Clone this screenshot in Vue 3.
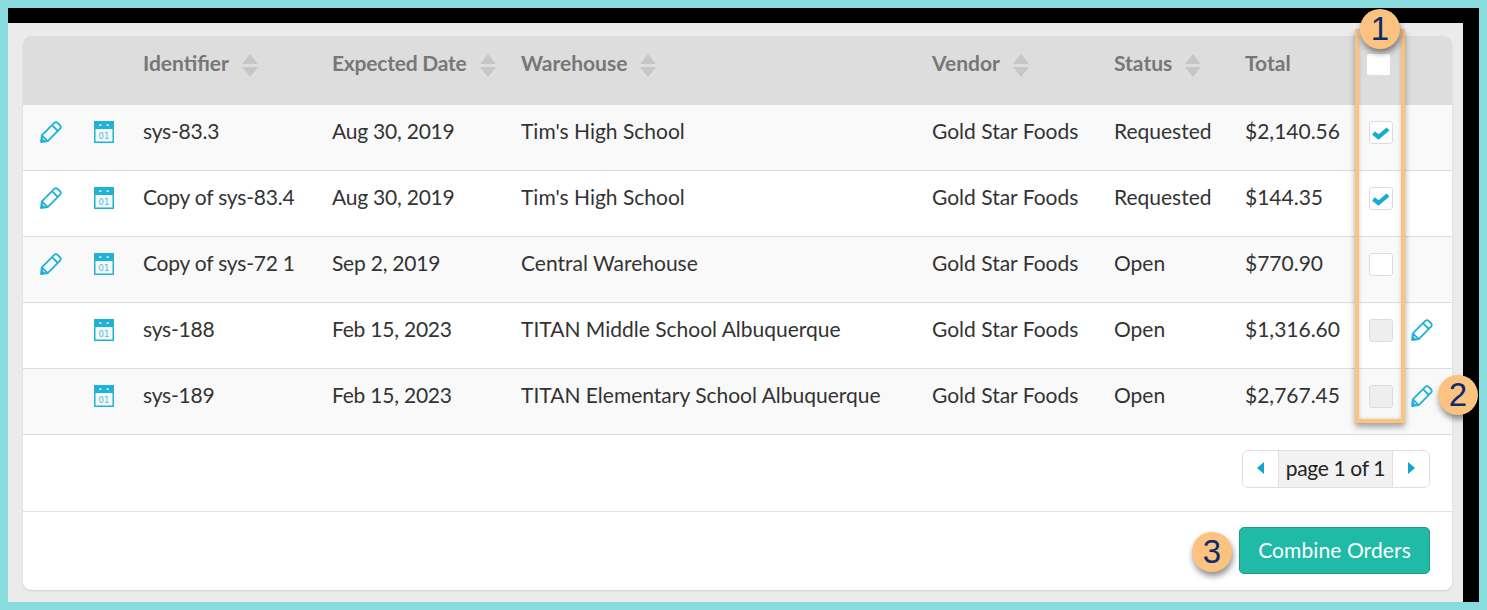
<script setup>
const columns = [
  { label: 'Identifier', sortable: true },
  { label: 'Expected Date', sortable: true, tight: true },
  { label: 'Warehouse', sortable: true },
  { label: 'Vendor', sortable: true },
  { label: 'Status', sortable: true },
  { label: 'Total', sortable: false },
]

const orders = [
  { id: 'sys-83.3', date: 'Aug 30, 2019', warehouse: "Tim's High School", vendor: 'Gold Star Foods', status: 'Requested', total: '$2,140.56', editLeft: true, check: 'on' },
  { id: 'Copy of sys-83.4', date: 'Aug 30, 2019', warehouse: "Tim's High School", vendor: 'Gold Star Foods', status: 'Requested', total: '$144.35', editLeft: true, check: 'on' },
  { id: 'Copy of sys-72 1', date: 'Sep 2, 2019', warehouse: 'Central Warehouse', vendor: 'Gold Star Foods', status: 'Open', total: '$770.90', editLeft: true, check: 'off' },
  { id: 'sys-188', date: 'Feb 15, 2023', warehouse: 'TITAN Middle School Albuquerque', vendor: 'Gold Star Foods', status: 'Open', total: '$1,316.60', editLeft: false, check: 'disabled' },
  { id: 'sys-189', date: 'Feb 15, 2023', warehouse: 'TITAN Elementary School Albuquerque', vendor: 'Gold Star Foods', status: 'Open', total: '$2,767.45', editLeft: false, check: 'disabled' },
]
</script>

<template>
  <div class="frame">
    <div class="screen">
      <div class="card">
        <div class="row head">
          <div></div>
          <div></div>
          <div v-for="col in columns" :key="col.label" class="cell" :class="{ tight: col.tight }">
            <span>{{ col.label }}</span>
            <span v-if="col.sortable" class="sort">
              <svg width="16" height="23" viewBox="0 0 16 23"><path d="M8 0 16 10H0zM0 13H16L8 23z" fill="#c6c6c6" /></svg>
            </span>
          </div>
          <div class="cell"><span class="check-all"></span></div>
          <div></div>
        </div>

        <div v-for="order in orders" :key="order.id" class="row body">
          <div class="icon-left">
            <svg v-if="order.editLeft" class="pencil" viewBox="0 0 22 22"><use href="#pencil-icon" /></svg>
          </div>
          <div class="icon-cal">
            <svg width="20" height="22" viewBox="0 0 20 22">
              <rect x="0" y="0" width="20" height="22" fill="#1fb1d6" />
              <rect x="1.5" y="8" width="17" height="12.5" fill="#f2fafc" />
              <rect x="5" y="3.5" width="2.5" height="1.2" fill="#fff" />
              <rect x="12.5" y="3.5" width="2.5" height="1.2" fill="#fff" />
              <text x="10" y="17.5" class="cal-text" text-anchor="middle">01</text>
            </svg>
          </div>
          <div class="cell tight">{{ order.id }}</div>
          <div class="cell tight">{{ order.date }}</div>
          <div class="cell">{{ order.warehouse }}</div>
          <div class="cell">{{ order.vendor }}</div>
          <div class="cell">{{ order.status }}</div>
          <div class="cell">{{ order.total }}</div>
          <div class="cell">
            <span class="check" :class="order.check">
              <svg v-if="order.check === 'on'" width="18" height="14" viewBox="0 0 18 14"><path d="M1.5 7 6.5 11 16 3" fill="none" stroke="#12acd4" stroke-width="4.2" /></svg>
            </span>
          </div>
          <div class="icon-right">
            <svg v-if="!order.editLeft" class="pencil" viewBox="0 0 22 22"><use href="#pencil-icon" /></svg>
          </div>
        </div>

        <div class="pager-bar">
          <div class="pager">
            <button class="page-btn prev"><svg width="8" height="12" viewBox="0 0 8 12"><path d="M7 0V12L0 6z" fill="#12a5d0" /></svg></button>
            <span class="page-label">page 1 of 1</span>
            <button class="page-btn next"><svg width="8" height="12" viewBox="0 0 8 12"><path d="M1 0V12L8 6z" fill="#12a5d0" /></svg></button>
          </div>
        </div>

        <div class="footer">
          <button class="combine">Combine Orders</button>
        </div>
      </div>

      <div class="highlight"></div>
      <span class="badge badge-1">1</span>
      <span class="badge badge-2">2</span>
      <span class="badge badge-3">3</span>
    </div>

    <svg width="0" height="0" class="defs">
      <symbol id="pencil-icon" viewBox="0 0 22 22">
        <path d="M1 21 1.8 14.3 14.3 1.8Q16 .6 17.5 1.8L20.2 4.5Q21.4 6 20.1 7.7L7.7 20.1zM1.8 14.3 7.7 20.1M12 4.1 17.8 10" fill="none" stroke="#1fb1d6" stroke-width="1.8" stroke-linejoin="round" />
        <path d="M1 21 1.6 16.4 5.6 20.4z" fill="#1fb1d6" />
      </symbol>
    </svg>
  </div>
</template>

<style>
body {
  margin: 0;
}
</style>

<style scoped>
.frame {
  width: 1487px;
  height: 610px;
  box-sizing: border-box;
  border: 8px solid #88dcdd;
  background: #000;
  padding: 15px 16px 0 0;
  overflow: hidden;
  font-family: Lato, sans-serif;
  color: #333;
}

.defs {
  position: absolute;
}

.screen {
  position: relative;
  height: 579px;
  box-sizing: border-box;
  background: #ebebeb;
  padding: 13px 11px 12px 15px;
}

.card {
  background: #fff;
  border-radius: 8px;
  box-shadow: 0 1px 2px rgba(0, 0, 0, 0.12);
  height: 554px;
  overflow: hidden;
}

.row {
  display: grid;
  grid-template-columns: 60px 50px 189px 189px 411px 182px 131px 124px 42px 51px;
  align-items: center;
  font-size: 21px;
}

.head {
  height: 69px;
  box-sizing: border-box;
  padding-bottom: 17px;
  background: #dddddd;
  color: #777;
  font-weight: 700;
}

.head .cell {
  display: flex;
  align-items: center;
}

.body {
  height: 66px;
  box-sizing: border-box;
  padding-bottom: 14px;
  border-bottom: 1px solid #dcdcdc;
  background: #fff;
}

.body:nth-child(even) {
  background: #f9f9f9;
}

.cell {
  padding-left: 10px;
  white-space: nowrap;
}

.tight {
  letter-spacing: -0.22px;
}

.sort {
  display: flex;
  margin-left: 13px;
  margin-top: 6px;
}

.icon-left {
  padding-left: 17px;
  display: flex;
  margin-top: 2px;
}

.icon-right {
  padding-left: 10px;
  display: flex;
  margin-top: 2px;
}

.icon-cal {
  padding-left: 11px;
  display: flex;
  margin-top: 2px;
}

.pencil {
  width: 22px;
  height: 22px;
}

.cal-text {
  font-family: 'DejaVu Sans', sans-serif;
  font-size: 8.5px;
  fill: #5db7d4;
}

.check-all {
  display: block;
  width: 23px;
  height: 21px;
  background: #fff;
  border-radius: 2px;
  margin-left: -2px;
  margin-top: 5px;
}

.check {
  display: flex;
  align-items: center;
  justify-content: center;
  width: 22px;
  height: 21px;
  border: 1px solid #dcdcdc;
  border-radius: 3px;
  background: #fff;
  margin-top: 4px;
}

.check.disabled {
  background: #eeeeee;
}

.pager-bar {
  height: 77px;
  box-sizing: border-box;
  display: flex;
  justify-content: flex-end;
  padding: 15px 22px 0 0;
  border-bottom: 1px solid #e2e2e2;
}

.pager {
  display: flex;
  height: 36px;
  border: 1px solid #e0e0e0;
  border-radius: 6px;
  overflow: hidden;
}

.page-btn {
  border: 0;
  background: #fff;
  padding: 0;
}

.prev {
  width: 35px;
}

.next {
  width: 36px;
}

.page-label {
  display: flex;
  align-items: center;
  justify-content: center;
  box-sizing: border-box;
  width: 115px;
  padding-bottom: 4px;
  background: #f2f2f2;
  border-left: 1px solid #e0e0e0;
  border-right: 1px solid #e0e0e0;
  font-size: 21px;
  letter-spacing: -0.35px;
  color: #222;
}

.footer {
  display: flex;
  justify-content: flex-end;
  padding: 15px 22px 0 0;
}

.combine {
  width: 191px;
  height: 47px;
  background: #20bba6;
  border: 1px solid #1c9a8a;
  border-radius: 5px;
  color: #fff;
  font-family: Lato, sans-serif;
  font-size: 21px;
  letter-spacing: 0.1px;
  padding: 0 0 2px;
}

.highlight {
  position: absolute;
  left: 1347px;
  top: 6px;
  width: 42px;
  height: 390px;
  border: 4px solid #fcc27f;
  border-top-width: 0;
  box-shadow: 0 4px 6px rgba(0, 0, 0, 0.35), inset 0 0 4px rgba(0, 0, 0, 0.18);
}

.badge {
  position: absolute;
  width: 40px;
  height: 40px;
  border-radius: 50%;
  background: #fcc27f;
  color: #0d2a6b;
  font-family: 'Liberation Sans', sans-serif;
  font-size: 33px;
  line-height: 40px;
  text-align: center;
  box-shadow: 1px 4px 6px rgba(0, 0, 0, 0.45);
}

.badge-1 {
  left: 1352px;
  top: -14px;
}

.badge-2 {
  left: 1430px;
  top: 352px;
}

.badge-3 {
  left: 1184px;
  top: 509px;
}
</style>
